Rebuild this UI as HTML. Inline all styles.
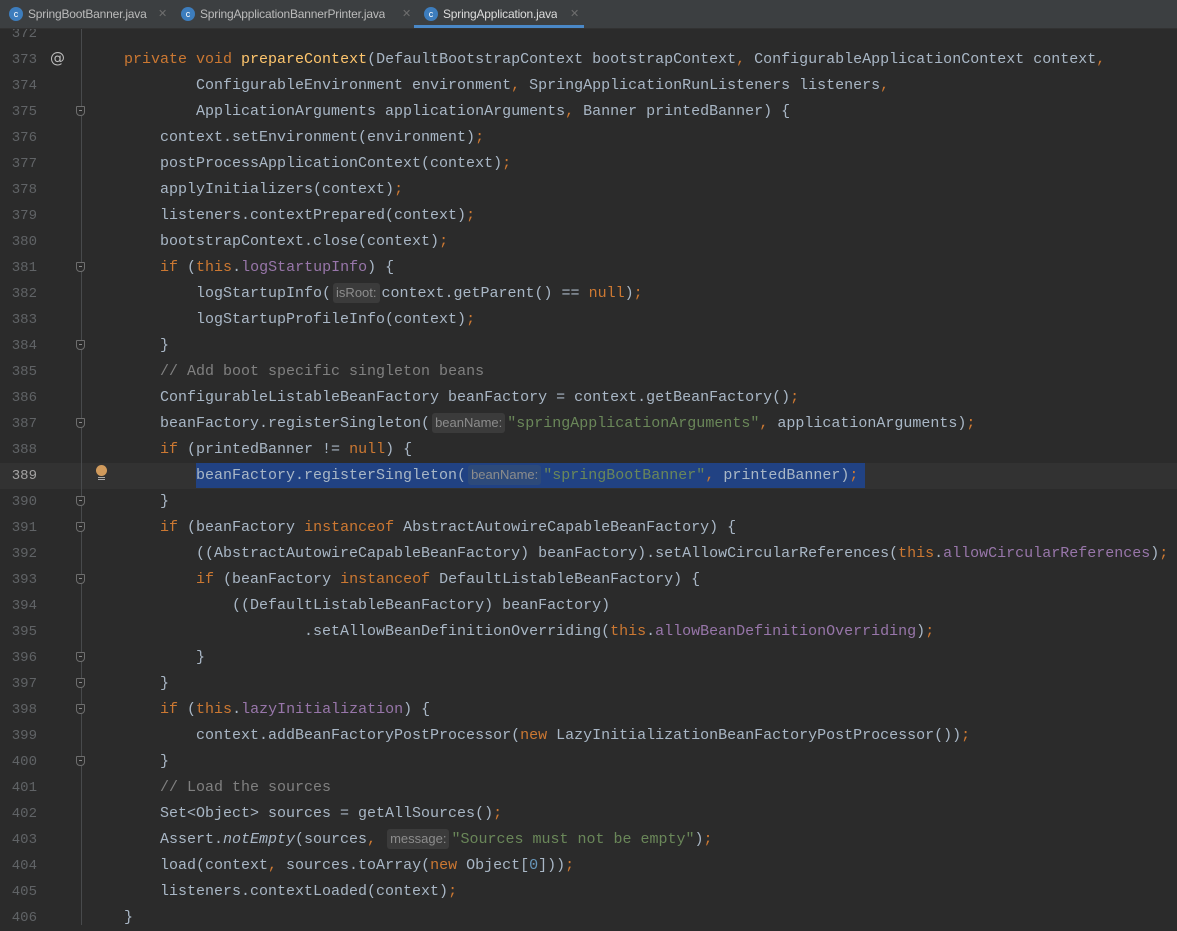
<!DOCTYPE html><html><head><meta charset="utf-8"><style>
body{margin:0;width:1177px;height:925px;overflow:hidden;background:#2b2b2b;font-family:"Liberation Mono",monospace;position:relative}
#tabs{position:absolute;left:0;top:0;width:1177px;height:28px;background:#3c3f41;z-index:5;border-bottom:1px solid #323232;font-family:"Liberation Sans",sans-serif;font-size:12px;color:#bbbbbb}
.tab{position:absolute;top:0;height:28px;line-height:29px}
.tab .ic{position:absolute;left:0;top:7px;width:14px;height:14px;border-radius:50%;background:#3d7dbd;color:#fff;font-size:9px;line-height:14px;text-align:center}
.tab .nm{position:absolute;left:19px;white-space:nowrap;overflow:hidden}
.tab .x{position:absolute;color:#6e6e6e;font-size:11px}
#gut{position:absolute;left:0;top:21px;width:80px}
.ln{height:26px;line-height:26px;color:#606366;font-size:14px;text-align:right;width:37px}
#vl{position:absolute;left:81px;top:28px;width:1px;height:897px;background:#484a4c}
.fm{position:absolute;left:76px;width:9px;height:10px;border:1px solid #6e6e6e;background:#2b2b2b;box-sizing:border-box;border-radius:1px 1px 4px 4px}
.fm::after{content:"";position:absolute;left:2px;top:3px;width:3px;height:1px;background:#8a8a8a}
#code{position:absolute;left:88px;top:21px;font-size:15px;color:#a9b7c6}
.l{height:26px;line-height:26px;white-space:pre}
.k{color:#cc7832}.m{color:#ffc66d}.s{color:#6a8759}.c{color:#808080}.f{color:#9876aa}.i{font-style:italic}
.h{display:inline-block;background:#3b3b3b;color:#8c8c8c;font-family:"Liberation Sans",sans-serif;font-size:13px;line-height:20px;padding:0 3px;border-radius:3px;margin:0 2px}
#cur{position:absolute;left:0;top:463px;width:1177px;height:26px;background:#323232}
#sel{position:absolute;left:196px;top:463px;width:669px;height:25px;background:#214283}
</style></head><body>
<div id="tabs">
<div class="tab" style="left:9px"><span class="ic">c</span><span class="nm" style="letter-spacing:-0.2px">SpringBootBanner.java</span><span class="x" style="left:149px">✕</span></div>
<div class="tab" style="left:181px"><span class="ic">c</span><span class="nm" style="letter-spacing:-0.2px">SpringApplicationBannerPrinter.java</span><span class="x" style="left:221px">✕</span></div>
<div class="tab" style="left:424px"><span class="ic">c</span><span class="nm" style="color:#dddddd;letter-spacing:-0.2px">SpringApplication.java</span><span class="x" style="left:146px">✕</span></div>
<div style="position:absolute;left:414px;top:25px;width:170px;height:3px;background:#4a88c7"></div>
</div>
<div id="cur"></div><div id="sel"></div>
<div id="vl"></div>
<div id="gut">
<div class="ln">372</div><div class="ln">373</div><div class="ln">374</div><div class="ln">375</div><div class="ln">376</div><div class="ln">377</div><div class="ln">378</div><div class="ln">379</div><div class="ln">380</div><div class="ln">381</div><div class="ln">382</div><div class="ln">383</div><div class="ln">384</div><div class="ln">385</div><div class="ln">386</div><div class="ln">387</div><div class="ln">388</div><div class="ln" style="color:#a4a3a3">389</div><div class="ln">390</div><div class="ln">391</div><div class="ln">392</div><div class="ln">393</div><div class="ln">394</div><div class="ln">395</div><div class="ln">396</div><div class="ln">397</div><div class="ln">398</div><div class="ln">399</div><div class="ln">400</div><div class="ln">401</div><div class="ln">402</div><div class="ln">403</div><div class="ln">404</div><div class="ln">405</div><div class="ln">406</div>
</div>
<div style="position:absolute;left:50px;top:49px;color:#bbbbbb;font-size:15px;font-family:'DejaVu Sans',sans-serif">@</div>
<div style="position:absolute;left:96px;top:465px;width:11px;height:11px;border-radius:50%;background:#d09a5c"></div>
<div style="position:absolute;left:98px;top:477px;width:7px;height:1px;background:#aaa"></div>
<div style="position:absolute;left:98px;top:479px;width:7px;height:1px;background:#aaa"></div>
<div class="fm" style="top:106px"></div><div class="fm" style="top:262px"></div><div class="fm" style="top:340px"></div><div class="fm" style="top:418px"></div><div class="fm" style="top:496px"></div><div class="fm" style="top:522px"></div><div class="fm" style="top:574px"></div><div class="fm" style="top:652px"></div><div class="fm" style="top:678px"></div><div class="fm" style="top:704px"></div><div class="fm" style="top:756px"></div>
<div id="code"><div class="l"> </div><div class="l">    <span class="k">private void </span><span class="m">prepareContext</span>(DefaultBootstrapContext bootstrapContext<span class="k">, </span>ConfigurableApplicationContext context<span class="k">,</span></div><div class="l">            ConfigurableEnvironment environment<span class="k">, </span>SpringApplicationRunListeners listeners<span class="k">,</span></div><div class="l">            ApplicationArguments applicationArguments<span class="k">, </span>Banner printedBanner) {</div><div class="l">        context.setEnvironment(environment)<span class="k">;</span></div><div class="l">        postProcessApplicationContext(context)<span class="k">;</span></div><div class="l">        applyInitializers(context)<span class="k">;</span></div><div class="l">        listeners.contextPrepared(context)<span class="k">;</span></div><div class="l">        bootstrapContext.close(context)<span class="k">;</span></div><div class="l">        <span class="k">if </span>(<span class="k">this</span>.<span class="f">logStartupInfo</span>) {</div><div class="l">            logStartupInfo(<span class="h">isRoot:</span>context.getParent() == <span class="k">null</span>)<span class="k">;</span></div><div class="l">            logStartupProfileInfo(context)<span class="k">;</span></div><div class="l">        }</div><div class="l">        <span class="c">// Add boot specific singleton beans</span></div><div class="l">        ConfigurableListableBeanFactory beanFactory = context.getBeanFactory()<span class="k">;</span></div><div class="l">        beanFactory.registerSingleton(<span class="h">beanName:</span><span class="s">"springApplicationArguments"</span><span class="k">, </span>applicationArguments)<span class="k">;</span></div><div class="l">        <span class="k">if </span>(printedBanner != <span class="k">null</span>) {</div><div class="l">            beanFactory.registerSingleton(<span class="h" style="background:#2d4a7a">beanName:</span><span class="s">"springBootBanner"</span><span class="k">, </span>printedBanner)<span class="k">;</span></div><div class="l">        }</div><div class="l">        <span class="k">if </span>(beanFactory <span class="k">instanceof </span>AbstractAutowireCapableBeanFactory) {</div><div class="l">            ((AbstractAutowireCapableBeanFactory) beanFactory).setAllowCircularReferences(<span class="k">this</span>.<span class="f">allowCircularReferences</span>)<span class="k">;</span></div><div class="l">            <span class="k">if </span>(beanFactory <span class="k">instanceof </span>DefaultListableBeanFactory) {</div><div class="l">                ((DefaultListableBeanFactory) beanFactory)</div><div class="l">                        .setAllowBeanDefinitionOverriding(<span class="k">this</span>.<span class="f">allowBeanDefinitionOverriding</span>)<span class="k">;</span></div><div class="l">            }</div><div class="l">        }</div><div class="l">        <span class="k">if </span>(<span class="k">this</span>.<span class="f">lazyInitialization</span>) {</div><div class="l">            context.addBeanFactoryPostProcessor(<span class="k">new </span>LazyInitializationBeanFactoryPostProcessor())<span class="k">;</span></div><div class="l">        }</div><div class="l">        <span class="c">// Load the sources</span></div><div class="l">        Set&lt;Object&gt; sources = getAllSources()<span class="k">;</span></div><div class="l">        Assert.<span class="i">notEmpty</span>(sources<span class="k">, </span><span class="h">message:</span><span class="s">"Sources must not be empty"</span>)<span class="k">;</span></div><div class="l">        load(context<span class="k">, </span>sources.toArray(<span class="k">new </span>Object[<span style="color:#6897bb">0</span>]))<span class="k">;</span></div><div class="l">        listeners.contextLoaded(context)<span class="k">;</span></div><div class="l">    }</div></div>
</body></html>
